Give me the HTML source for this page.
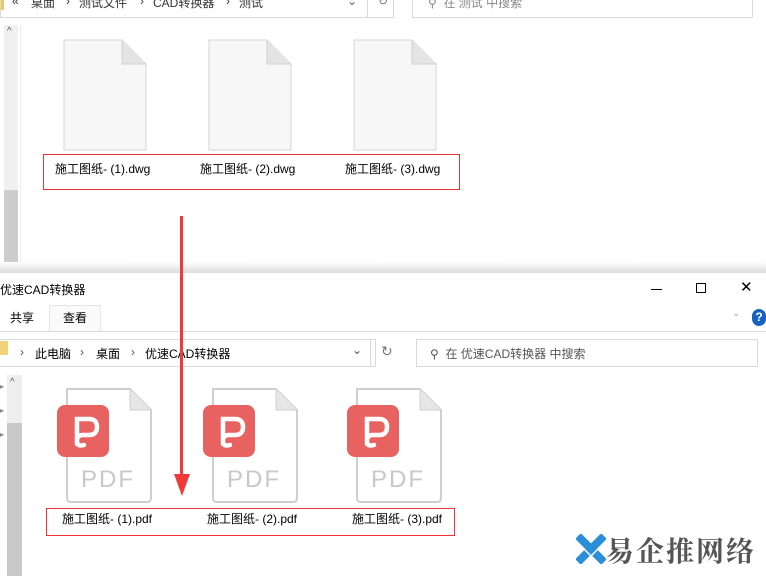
<!DOCTYPE html>
<html><head><meta charset="utf-8"><style>
*{margin:0;padding:0;box-sizing:border-box}
body{width:766px;height:576px;overflow:hidden;background:#fff;position:relative;font-family:"Liberation Sans","Noto Sans CJK SC",sans-serif;font-size:12px;color:#000}
.a{position:absolute}
.t{position:absolute;white-space:nowrap}
.gray{color:#333}
</style></head><body>
<!-- top window -->
<div class="a" style="left:0;top:-2px;width:4px;height:12px;background:#f0c75a"></div>
<div class="a" style="left:0;top:-2px;width:394px;height:20px;border:1px solid #d9d9d9;border-top:none"></div>
<div class="t gray" style="left:12px;top:-6px">«</div>
<div class="t gray" style="left:31px;top:-6px">桌面</div>
<div class="t gray" style="left:66px;top:-6px">›</div>
<div class="t gray" style="left:79px;top:-6px">测试文件</div>
<div class="t gray" style="left:140px;top:-6px">›</div>
<div class="t gray" style="left:153px;top:-6px">CAD转换器</div>
<div class="t gray" style="left:226px;top:-6px">›</div>
<div class="t gray" style="left:239px;top:-6px">测试</div>
<div class="t" style="left:347px;top:-6px;color:#666">⌄</div>
<div class="a" style="left:367px;top:-2px;width:1px;height:20px;background:#d9d9d9"></div>
<div class="t" style="left:378px;top:-6px;color:#777">↻</div>
<div class="a" style="left:412px;top:-2px;width:341px;height:20px;border:1px solid #d9d9d9;border-top:none"></div>
<div class="t" style="left:428px;top:-6px;color:#888">⚲ &nbsp;在 测试 中搜索</div>
<div class="a" style="left:4px;top:25px;width:14px;height:247px;background:#f0f0f0"></div>
<div class="a" style="left:4px;top:190px;width:14px;height:82px;background:#cdcdcd"></div>
<div class="t" style="left:7px;top:26px;font-size:10px;color:#555">^</div>
<div class="a" style="left:20px;top:25px;width:1px;height:247px;background:#eee"></div>
<svg class="a" style="left:60px;top:38px" width="400" height="116">
<defs><g id="f"><path d="M4 2H62L86 26V112H4Z" fill="#f7f7f7" stroke="#d6d6d6"/><path d="M62 2V26H86" fill="#e4e4e4" stroke="#d0d0d0"/></g></defs>
<use href="#f" x="0"/><use href="#f" x="145"/><use href="#f" x="290"/>
</svg>
<div class="a" style="left:43px;top:154px;width:417px;height:36px;border:1px solid #e33"></div>
<div class="t" style="left:55px;top:160px">施工图纸- (1).dwg</div>
<div class="t" style="left:200px;top:160px">施工图纸- (2).dwg</div>
<div class="t" style="left:345px;top:160px">施工图纸- (3).dwg</div>
<!-- shadow -->
<div class="a" style="left:0;top:262px;width:766px;height:12px;background:linear-gradient(#fff,#d8d8d8)"></div>
<!-- bottom window -->
<div class="a" style="left:0;top:273px;width:766px;height:303px;background:#fff"></div>
<div class="t" style="left:0;top:281px">优速CAD转换器</div>
<div class="a" style="left:651px;top:289px;width:11px;height:1px;background:#000"></div>
<div class="a" style="left:696px;top:283px;width:10px;height:10px;border:1px solid #000"></div>
<div class="t" style="left:740px;top:278px;font-size:15px">✕</div>
<div class="a" style="left:49px;top:305px;width:52px;height:27px;border:1px solid #e6e6e6;border-bottom:none;background:#fafafa"></div>
<div class="t" style="left:10px;top:309px">共享</div>
<div class="t" style="left:63px;top:309px">查看</div>
<div class="a" style="left:0;top:331px;width:766px;height:1px;background:#dadada"></div>
<div class="t" style="left:732px;top:308px;color:#aaa;font-size:10px">⌄</div>
<div class="a" style="left:752px;top:309px;width:14px;height:17px;border-radius:8px;background:#1565c0;color:#fff;font-weight:bold;font-size:12px;text-align:center;line-height:17px">?</div>
<div class="a" style="left:0;top:341px;width:8px;height:14px;background:#f4d27a"></div>
<div class="a" style="left:0;top:339px;width:376px;height:28px;border:1px solid #d9d9d9;border-left:none"></div>
<div class="t" style="left:20px;top:345px;color:#555">›</div>
<div class="t" style="left:35px;top:345px">此电脑</div>
<div class="t" style="left:80px;top:345px;color:#555">›</div>
<div class="t" style="left:96px;top:345px">桌面</div>
<div class="t" style="left:131px;top:345px;color:#555">›</div>
<div class="t" style="left:145px;top:345px">优速CAD转换器</div>
<div class="t" style="left:352px;top:343px;color:#555">⌄</div>
<div class="a" style="left:370px;top:339px;width:1px;height:28px;background:#d9d9d9"></div>
<div class="t" style="left:381px;top:343px;color:#777;font-size:14px">↻</div>
<div class="a" style="left:416px;top:339px;width:342px;height:28px;border:1px solid #d9d9d9"></div>
<div class="t" style="left:430px;top:345px;color:#555">⚲ &nbsp;在 优速CAD转换器 中搜索</div>
<div class="a" style="left:7px;top:375px;width:15px;height:201px;background:#c9c9c9"></div>
<div class="a" style="left:7px;top:375px;width:15px;height:48px;background:#eee"></div>
<div class="t" style="left:10px;top:377px;font-size:10px;color:#555">^</div>
<div class="t" style="left:0;top:375px;font-size:8px;color:#888;line-height:24px">▸<br>▸<br>▸</div>
<svg class="a" style="left:55px;top:386px" width="400" height="120">
<defs><g id="p"><path d="M12 3H75L96 24V112Q96 116 92 116H16Q12 116 12 112Z" fill="#fff" stroke="#cfcfcf" stroke-width="2"/><path d="M75 3V24H96" fill="#e6e6e6" stroke="#cfcfcf"/><rect x="2" y="19" width="52" height="52" rx="8" fill="#e86262"/><path d="M22 58V33H34Q42 33 42 41Q42 49 34 49H28Q22 49 22 55Q22 61 29 59" fill="none" stroke="#fff" stroke-width="4.5" stroke-linecap="round"/><text x="53" y="101" font-family="Liberation Sans,sans-serif" font-size="24" fill="#c8c8c8" text-anchor="middle" letter-spacing="2">PDF</text></g></defs>
<use href="#p" x="0"/><use href="#p" x="146"/><use href="#p" x="290"/>
</svg>
<div class="a" style="left:46px;top:508px;width:409px;height:28px;border:1px solid #e33"></div>
<div class="t" style="left:62px;top:510px">施工图纸- (1).pdf</div>
<div class="t" style="left:207px;top:510px">施工图纸- (2).pdf</div>
<div class="t" style="left:352px;top:510px">施工图纸- (3).pdf</div>
<!-- arrow -->
<div class="a" style="left:180px;top:216px;width:3px;height:262px;background:#f03a3a"></div>
<svg class="a" style="left:174px;top:474px" width="16" height="22"><path d="M0 0H16L8 22Z" fill="#f03a3a"/></svg>
<!-- watermark -->
<svg class="a" style="left:576px;top:534px" width="30" height="30"><path d="M2 2L28 28M28 2L2 28" stroke="#2a8fd8" stroke-width="8"/><path d="M8 15L15 22L22 15" stroke="#fff" stroke-width="1.5" fill="none"/></svg>
<div class="t" style="left:606px;top:530px;font-size:28px;font-weight:bold;color:#555;letter-spacing:2px;font-family:'Noto Serif CJK SC',serif">易企推网络</div>
</body></html>
